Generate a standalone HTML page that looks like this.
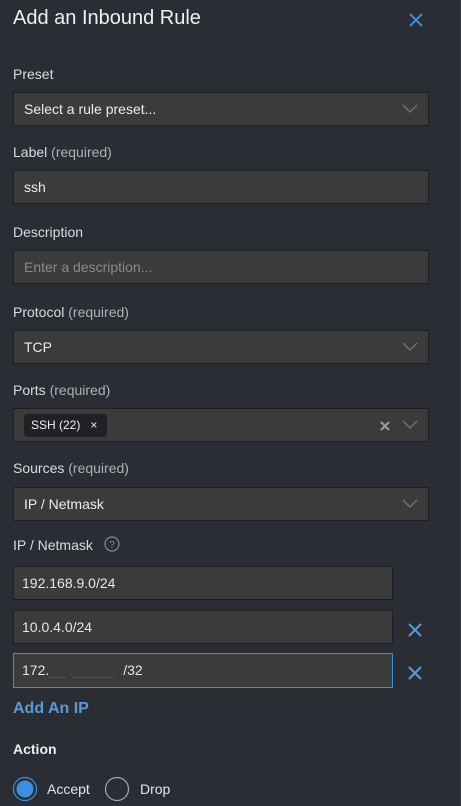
<!DOCTYPE html>
<html><head><style>
body{margin:0;width:461px;height:806px;background:#2a2d33;font-family:"Liberation Sans",sans-serif;color:#e6e6e6;position:relative;overflow:hidden}
.a{position:absolute}
.t{left:13px;top:7px;font-size:20px;color:#f0f0f0}
.lbl{left:13px;font-size:14px;color:#dcdcdc}
.lbl span{color:#b0b0b0}
.box{left:13px;width:414px;height:32px;background:#3b3b3b;border:1px solid #1e1f22;box-sizing:content-box}
.box .v{position:absolute;left:10px;top:8px;font-size:14px;color:#ececec}
.ph{color:#8a8a8a!important}
.chev{position:absolute;right:10px;top:11px}
.ip{left:13px;width:378px;height:32px;background:#3b3b3b;border:1px solid #1e1f22}
.ip .v{position:absolute;left:8px;top:8px;font-size:14px}
</style></head><body>
<div class="a t">Add an Inbound Rule</div>
<svg class="a" style="left:408px;top:12px" width="16" height="16"><path d="M2 2L14 14M14 2L2 14" stroke="#3d8ee0" stroke-width="2"/></svg>

<div class="a lbl" style="top:66px">Preset</div>
<div class="a box" style="top:92px"><div class="v">Select a rule preset...</div><svg class="chev" width="16" height="10"><path d="M1 1L8 8L15 1" stroke="#707070" stroke-width="1.5" fill="none"/></svg></div>

<div class="a lbl" style="top:144px">Label <span>(required)</span></div>
<div class="a box" style="top:170px"><div class="v">ssh</div></div>

<div class="a lbl" style="top:224px">Description</div>
<div class="a box" style="top:250px"><div class="v ph">Enter a description...</div></div>

<div class="a lbl" style="top:304px">Protocol <span>(required)</span></div>
<div class="a box" style="top:330px"><div class="v">TCP</div><svg class="chev" width="16" height="10"><path d="M1 1L8 8L15 1" stroke="#707070" stroke-width="1.5" fill="none"/></svg></div>

<div class="a lbl" style="top:382px">Ports <span>(required)</span></div>
<div class="a box" style="top:408px">
 <div style="position:absolute;left:10px;top:5px;width:83px;height:23px;background:#202124;border-radius:3px;font-size:12px;line-height:23px;color:#eee;padding-left:7px;box-sizing:border-box">SSH (22) &nbsp;&nbsp;×</div>
 <svg style="position:absolute;right:38px;top:12px" width="10" height="10"><path d="M1 1L9 9M9 1L1 9" stroke="#9a9a9a" stroke-width="2.2"/></svg>
 <svg class="chev" width="16" height="10"><path d="M1 1L8 8L15 1" stroke="#707070" stroke-width="1.5" fill="none"/></svg></div>

<div class="a lbl" style="top:460px">Sources <span>(required)</span></div>
<div class="a box" style="top:487px"><div class="v">IP / Netmask</div><svg class="chev" width="16" height="10"><path d="M1 1L8 8L15 1" stroke="#707070" stroke-width="1.5" fill="none"/></svg></div>

<div class="a lbl" style="top:537px">IP / Netmask</div>
<svg class="a" style="left:104px;top:536px" width="16" height="16"><circle cx="8" cy="8" r="7" stroke="#8a8a8a" stroke-width="1.2" fill="none"/><text x="8" y="12" font-size="10" text-anchor="middle" fill="#8a8a8a" font-family="Liberation Sans">?</text></svg>

<div class="a ip" style="top:566px"><div class="v">192.168.9.0/24</div></div>
<div class="a ip" style="top:610px"><div class="v">10.0.4.0/24</div></div>
<svg class="a" style="left:407px;top:622px" width="16" height="16"><path d="M2 2L14 14M14 2L2 14" stroke="#5b9ad8" stroke-width="2"/></svg>
<div class="a ip" style="top:653px;height:33px;border-color:#3d8ee0"><div class="v">172.<span style="color:#555">__ ._____. .</span>/32</div></div>
<svg class="a" style="left:407px;top:665px" width="16" height="16"><path d="M2 2L14 14M14 2L2 14" stroke="#5b9ad8" stroke-width="2"/></svg>

<div class="a" style="left:13px;top:700px;font-size:16px;font-weight:bold;color:#5b9ad8">Add An IP</div>
<div class="a lbl" style="top:741px;color:#eee;font-weight:bold">Action</div>

<svg class="a" style="left:12px;top:776px" width="26" height="26"><circle cx="13" cy="13" r="11.5" stroke="#3d8ee0" stroke-width="1.2" fill="none"/><circle cx="13" cy="13" r="8.5" fill="#3d8ee0"/></svg>
<div class="a" style="left:47px;top:781px;font-size:14px">Accept</div>
<svg class="a" style="left:104px;top:776px" width="26" height="26"><circle cx="13" cy="13" r="11.5" stroke="#a8a8a8" stroke-width="1.2" fill="none"/></svg>
<div class="a" style="left:140px;top:781px;font-size:14px">Drop</div>
<div class="a" style="left:460px;top:0;width:1px;height:806px;background:#3a3d43"></div>
</body></html>
